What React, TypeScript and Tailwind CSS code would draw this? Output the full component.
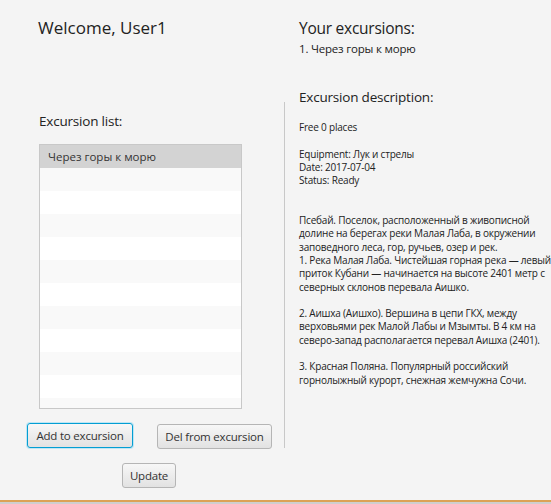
import React from "react";

const rows = Array.from({ length: 11 });

const Btn = ({ label, w, focused }: { label: string; w: string; focused?: boolean }) => (
  <button
    className={
      "h-[25px] whitespace-nowrap rounded-[3px] border bg-gradient-to-b from-[#f7f7f7] to-[#e2e2e2] text-[11.5px] leading-none tracking-[-0.2px] text-[#333] " +
      w +
      (focused
        ? " border-[#039ed3] shadow-[0_0_0_1px_#bfe6f4]"
        : " border-[#b5b5b5]")
    }
  >
    {label}
  </button>
);

export default function App() {
  return (
    <div
      className="relative h-[504px] w-[551px] overflow-hidden bg-[#f4f4f4] text-[#222]"
      style={{ fontFamily: '"Open Sans", "Noto Sans", sans-serif' }}
    >
      <div className="flex h-[500px]">
        {/* left */}
        <div className="flex w-[284px] flex-col">
          <div className="pl-[38px] pt-[16px] text-[17px] leading-[24px]">
            Welcome, User1
          </div>
          <div className="mt-[71px] pl-[39px] text-[13.5px] leading-[20px] tracking-[-0.2px]">
            Excursion list:
          </div>
          <div className="ml-[39px] mt-[13px] h-[265px] w-[203px] overflow-hidden border border-[#c8c8c8] bg-white">
            <div className="flex h-[23px] items-center bg-[#d3d3d3] pl-[8px] text-[11.5px] text-[#333]">
              Через горы к морю
            </div>
            {rows.map((_, i) => (
              <div
                key={i}
                className={i % 2 === 0 ? "h-[23px] bg-[#f9f9f9]" : "h-[23px] bg-white"}
              />
            ))}
          </div>
          <div className="mt-[14px] flex pl-[27px]">
            <Btn label="Add to excursion" w="w-[106px]" focused />
            <div className="ml-[24px]">
              <Btn label="Del from excursion" w="w-[115px]" />
            </div>
          </div>
          <div className="mt-[14px] flex pl-[122px]">
            <Btn label="Update" w="w-[54px]" />
          </div>
        </div>

        {/* separator */}
        <div className="mt-[102px] h-[346px] w-px bg-[#c8c8c8]" />

        {/* right */}
        <div className="flex flex-1 flex-col pl-[14px]">
          <div className="pt-[17px] text-[15.5px] leading-[22px] tracking-[-0.25px]">Your excursions:</div>
          <div className="mt-[2px] text-[11.5px] leading-[16px] tracking-[-0.2px]">1. Через горы к морю</div>
          <div className="mt-[30px] text-[13.5px] leading-[20px] tracking-[-0.2px]">Excursion description:</div>
          <div className="mt-[14px] whitespace-nowrap text-[10px] leading-[13.3px] tracking-[-0.2px]">
            <div>Free 0 places</div>
            <div className="h-[13.3px]" />
            <div>Equipment: Лук и стрелы</div>
            <div>Date: 2017-07-04</div>
            <div>Status: Ready</div>
            <div className="h-[26.6px]" />
            <div>Псебай. Поселок, расположенный в живописной</div>
            <div>долине на берегах реки Малая Лаба, в окружении</div>
            <div>заповедного леса, гор, ручьев, озер и рек.</div>
            <div>1. Река Малая Лаба. Чистейшая горная река — левый</div>
            <div>приток Кубани — начинается на высоте 2401 метр с</div>
            <div>северных склонов перевала Аишко.</div>
            <div className="h-[13.3px]" />
            <div>2. Аишха (Аишхо). Вершина в цепи ГКХ, между</div>
            <div>верховьями рек Малой Лабы и Мзымты. В 4 км на</div>
            <div>северо-запад располагается перевал Аишха (2401).</div>
            <div className="h-[13.3px]" />
            <div>3. Красная Поляна. Популярный российский</div>
            <div>горнолыжный курорт, снежная жемчужна Сочи.</div>
          </div>
        </div>
      </div>
      <div className="h-[2px] bg-[#dca256]" />
      <div className="h-[2px] bg-[#cfcfcf]" />
    </div>
  );
}
